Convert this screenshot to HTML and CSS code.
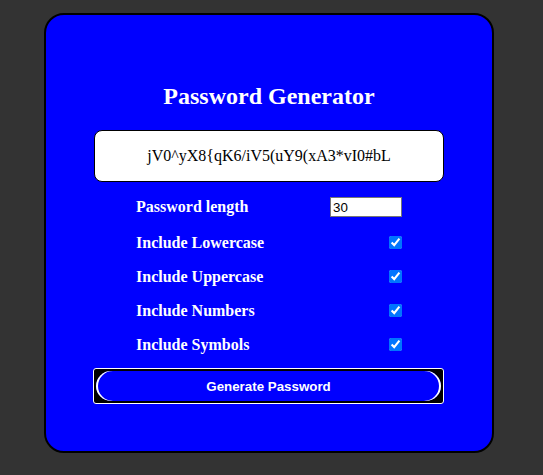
FILE: index.html
```html
<!DOCTYPE html>
<html lang="en">
<head>
<meta charset="utf-8">
<title>Password Generator</title>
<link rel="stylesheet" href="styles.css">
</head>
<body>
<div class="card">
  <h1 class="title">Password Generator</h1>
  <div class="result">jV0^yX8{qK6/iV5(uY9(xA3*vI0#bL</div>
  <div class="options">
    <div class="row row-length">
      <label class="label" for="length">Password length</label>
      <input class="length-input" id="length" type="text" value="30">
    </div>
    <div class="row">
      <label class="label" for="lower">Include Lowercase</label>
      <input class="check" id="lower" type="checkbox" checked>
    </div>
    <div class="row">
      <label class="label" for="upper">Include Uppercase</label>
      <input class="check" id="upper" type="checkbox" checked>
    </div>
    <div class="row">
      <label class="label" for="numbers">Include Numbers</label>
      <input class="check" id="numbers" type="checkbox" checked>
    </div>
    <div class="row">
      <label class="label" for="symbols">Include Symbols</label>
      <input class="check" id="symbols" type="checkbox" checked>
    </div>
  </div>
  <div class="btn-frame">
    <button class="btn" type="button">Generate Password</button>
  </div>
</div>
</body>
</html>
```
FILE: styles.css
```css
html, body {
  margin: 0;
  padding: 0;
}

body {
  background: #333333;
  font-family: "Liberation Serif", "Times New Roman", serif;
  overflow: hidden;
}

.card {
  box-sizing: border-box;
  width: 450px;
  margin: 13px 0 0 44px;
  padding: 67px 48px 47px;
  border: 2px solid #000;
  border-radius: 20px;
  background: #0000ff;
  color: #fff;
}

.title {
  margin: 0;
  font-size: 24px;
  line-height: 28px;
  font-weight: bold;
  text-align: center;
}

.result {
  box-sizing: border-box;
  height: 52px;
  margin-top: 20px;
  display: flex;
  align-items: center;
  justify-content: center;
  background: #fff;
  color: #000;
  border: 1px solid #000;
  border-radius: 8px;
  font-size: 16px;
  line-height: 20px;
}

.options {
  margin-top: 14px;
  padding: 0 42px;
}

.row {
  display: flex;
  align-items: center;
  justify-content: space-between;
  min-height: 19px;
}

.row + .row {
  margin-top: 15px;
}

.row-length {
  min-height: 22px;
}

.label {
  font-size: 16px;
  font-weight: bold;
}

.length-input {
  box-sizing: border-box;
  width: 72px;
  height: 20px;
  margin: 0;
  padding: 1px 2px;
  border: 1px solid #767676;
  background: #fff;
  color: #000;
  font-family: "Liberation Sans", Arial, sans-serif;
  font-size: 13.33px;
}

.check {
  width: 13px;
  height: 13px;
  margin: 3px 0;
}

.btn-frame {
  box-sizing: border-box;
  width: 351px;
  height: 36px;
  margin: 14px 0 0 -1px;
  padding: 2px;
  border: 1px solid #fff;
  border-radius: 3px;
  background: #000;
}

.btn {
  display: block;
  width: 100%;
  height: 30px;
  margin: 0;
  padding: 0;
  border: none;
  border-radius: 15px;
  background: #0000ff;
  box-shadow: inset 2px 0 0 #fff, inset -2px 0 0 #fff;
  color: #fff;
  font-family: "Liberation Sans", Arial, sans-serif;
  font-size: 13.33px;
  font-weight: bold;
}
```
